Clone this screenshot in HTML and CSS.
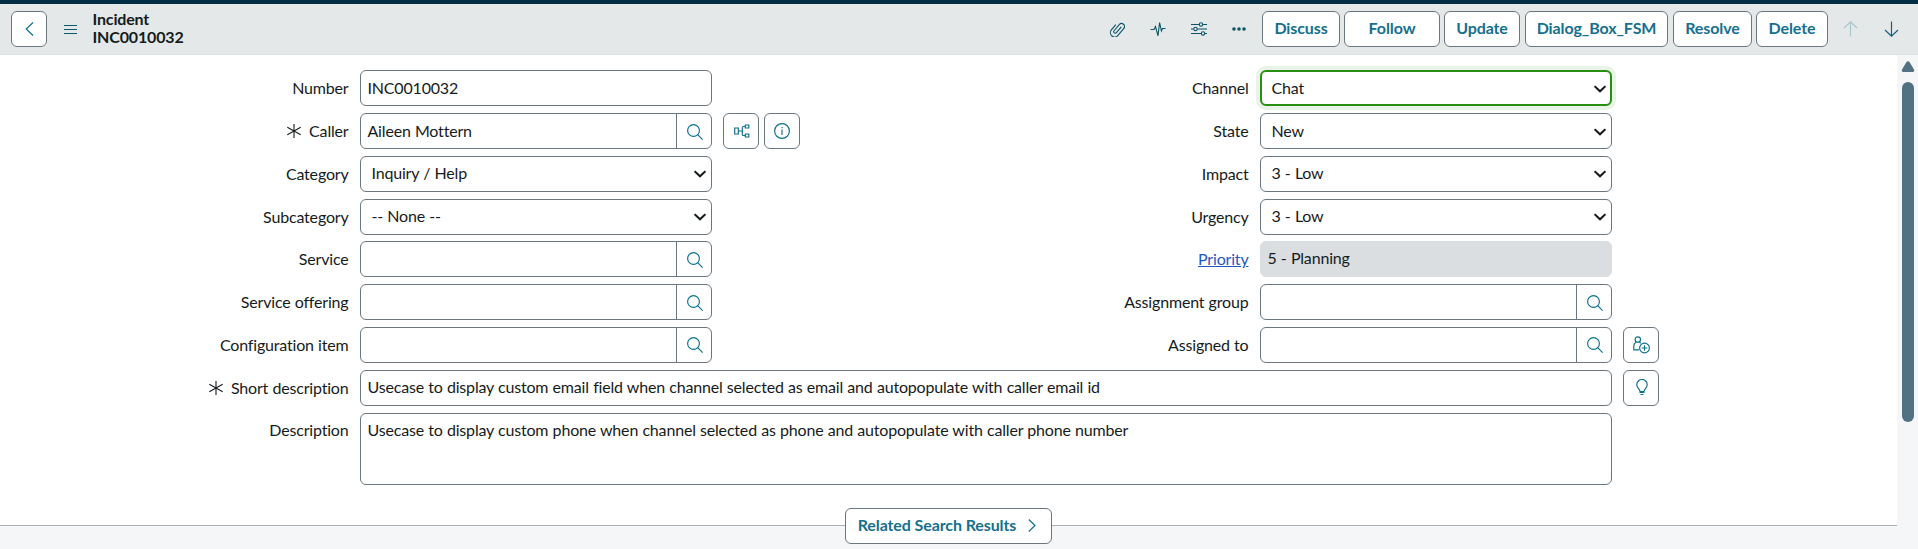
FILE: index.html
```html
<!DOCTYPE html>
<html lang="en">
<head>
<meta charset="utf-8">
<title>Incident INC0010032</title>
<link rel="stylesheet" href="styles.css">
</head>
<body>
<svg class="defs" width="0" height="0">
  <symbol id="search" viewBox="0 0 16 16"><circle cx="6.5" cy="6.5" r="5.9"/><path d="M10.7 10.7 15.6 15.6"/></symbol>
  <symbol id="chevron" viewBox="0 0 12 8"><path d="M.6 1.200 6 6.200l5.400-5"/></symbol>
  <symbol id="asterisk" viewBox="0 0 14 14"><path d="M7 0v14M.3 3.300l13.400 7.400M13.700 3.300l-13.400 7.400"/></symbol>
</svg>
<header class="header">
  <button class="btn back"><svg class="icon" width="9" height="14" viewBox="0 0 9 14"><path d="M8 .5 1.200 7 8 13.500"/></svg></button>
  <svg class="icon menu" width="13" height="9" viewBox="0 0 13 9"><path d="M0 .5h13M0 4.500h13M0 8.500h13"/></svg>
  <h1 class="title">Incident<br>INC0010032</h1>
  <div class="tools">
    <svg class="icon" width="16" height="16" viewBox="0 0 16 16"><path transform="translate(8 8) rotate(40)" d="M1.900-4.500V3.200a1.500 1.500 0 0 1-3 0V-4.800a3 3 0 0 1 6 0V4.300a4.300 4.300 0 0 1-8.600 0V-2.500"/></svg>
    <svg class="icon" width="16" height="16" viewBox="0 0 16 16"><path d="M.5 8.500H4l1.500-3L8 14.800 9.600 1.500l1.800 8.500 1.100-2.500h3"/></svg>
    <svg class="icon" width="16" height="14" viewBox="0 0 16 14"><path d="M0 2.500h8.300M11.700 2.500H16M0 7h2.800M6.200 7H16M0 11.500h10.300M13.700 11.500H16"/><circle cx="10" cy="2.500" r="1.700"/><circle cx="4.500" cy="7" r="1.700"/><circle cx="12" cy="11.500" r="1.700"/></svg>
    <svg class="dots" width="14" height="4" viewBox="0 0 14 4"><circle cx="2" cy="2" r="1.800"/><circle cx="7" cy="2" r="1.800"/><circle cx="12" cy="2" r="1.800"/></svg>
  </div>
  <div class="actions">
    <button class="btn discuss">Discuss</button>
    <button class="btn follow">Follow</button>
    <button class="btn update">Update</button>
    <button class="btn dialog">Dialog_Box_FSM</button>
    <button class="btn resolve">Resolve</button>
    <button class="btn delete">Delete</button>
  </div>
  <div class="pager">
    <svg class="icon disabled" width="15" height="16" viewBox="0 0 15 16"><path d="M7.500 15.500V1M1 7l6.500-6.200L14 7"/></svg>
    <svg class="icon" width="15" height="16" viewBox="0 0 15 16"><path d="M7.500 .5V15M1 9l6.500 6.200L14 9"/></svg>
  </div>
</header>
<div class="body">
  <main class="content">
    <form class="form">
      <div class="columns">
        <div class="column">
          <div class="row"><label class="label">Number</label><div class="field">INC0010032</div></div>
          <div class="row"><label class="label"><svg class="required" width="14" height="14"><use href="#asterisk"/></svg>Caller</label><div class="field lookup"><span class="value">Aileen Mottern</span><span class="lens"><svg class="icon" width="16" height="16"><use href="#search"/></svg></span></div>
            <div class="extras">
              <button type="button" class="btn square"><svg class="icon nodes" width="16" height="14" viewBox="0 0 16 14"><path d="M.7 4h3.600v6H.7zM4.300 7h4M11 2.500H9.300Q8.300 2.500 8.300 3.500v7q0 1 1 1H11M11.300 1h3.500v3h-3.500zM11.300 10h3.500v3h-3.500z"/></svg></button>
              <button type="button" class="btn square"><svg class="icon" width="16" height="16" viewBox="0 0 16 16"><circle cx="8" cy="8" r="7.400"/><path d="M8 6.500v5.500M8 4v1.300"/></svg></button>
            </div></div>
          <div class="row"><label class="label">Category</label><div class="field select">Inquiry / Help<svg class="chevron" width="12" height="8"><use href="#chevron"/></svg></div></div>
          <div class="row"><label class="label">Subcategory</label><div class="field select">-- None --<svg class="chevron" width="12" height="8"><use href="#chevron"/></svg></div></div>
          <div class="row snug"><label class="label">Service</label><div class="field lookup"><span class="value"></span><span class="lens"><svg class="icon" width="16" height="16"><use href="#search"/></svg></span></div></div>
          <div class="row"><label class="label">Service offering</label><div class="field lookup"><span class="value"></span><span class="lens"><svg class="icon" width="16" height="16"><use href="#search"/></svg></span></div></div>
          <div class="row"><label class="label">Configuration item</label><div class="field lookup"><span class="value"></span><span class="lens raised"><svg class="icon" width="16" height="16"><use href="#search"/></svg></span></div></div>
        </div>
        <div class="column">
          <div class="row"><label class="label">Channel</label><div class="field select focused">Chat<svg class="chevron" width="12" height="8"><use href="#chevron"/></svg></div></div>
          <div class="row"><label class="label">State</label><div class="field select low">New<svg class="chevron" width="12" height="8"><use href="#chevron"/></svg></div></div>
          <div class="row"><label class="label">Impact</label><div class="field select">3 - Low<svg class="chevron" width="12" height="8"><use href="#chevron"/></svg></div></div>
          <div class="row"><label class="label">Urgency</label><div class="field select">3 - Low<svg class="chevron" width="12" height="8"><use href="#chevron"/></svg></div></div>
          <div class="row snug"><label class="label"><a class="link" href="#">Priority</a></label><div class="field readonly">5 - Planning</div></div>
          <div class="row"><label class="label">Assignment group</label><div class="field lookup"><span class="value"></span><span class="lens"><svg class="icon" width="16" height="16"><use href="#search"/></svg></span></div></div>
          <div class="row"><label class="label">Assigned to</label><div class="field lookup"><span class="value"></span><span class="lens raised"><svg class="icon" width="16" height="16"><use href="#search"/></svg></span></div>
            <div class="extras"><button type="button" class="btn square"><svg class="icon" width="17" height="18" viewBox="0 0 17 18"><circle cx="4.800" cy="3.600" r="2.700"/><path d="M3.200 6.300C1.500 7 .8 8.500.8 10.500v3.300H6M6.500 6.300l1.300 1"/><circle cx="11.500" cy="12" r="4.900"/><path d="M11.500 9.200v5.600M8.700 12h5.600"/></svg></button></div></div>
        </div>
      </div>
      <div class="row"><label class="label"><svg class="required" width="14" height="14"><use href="#asterisk"/></svg>Short description</label><div class="field wide raised">Usecase to display custom email field when channel selected as email and autopopulate with caller email id</div>
        <div class="extras"><button type="button" class="btn square"><svg class="icon bulb" width="12" height="17" viewBox="0 0 12 17"><path d="M4 12.500C4 10 .8 9 .8 5.700a5.200 5.200 0 0 1 10.400 0C11.200 9 8 10 8 12.500z"/><path d="M3.500 13.500h5M4.500 15.500h3"/></svg></button></div></div>
      <div class="row top"><label class="label">Description</label><div class="field wide area">Usecase to display custom phone when channel selected as phone and autopopulate with caller phone number</div></div>
    </form>
    <div class="related"><button class="btn results">Related Search Results<svg class="icon" width="8" height="13" viewBox="0 0 8 13"><path d="M.8 .5 7 6.500.8 12.500"/></svg></button></div>
  </main>
  <aside class="scrollbar"><svg class="scroll-up" width="14" height="11" viewBox="0 0 14 11"><path d="M5.500 1Q7-.7 8.500 1L13 8.500Q13.800 10.900 12 10.900H2Q.2 10.900 1 8.500z"/></svg><div class="thumb"></div></aside>
</div>
</body>
</html>
```
FILE: styles.css
```css
* { box-sizing: border-box; }
body {
  margin: 0;
  height: 549px;
  overflow: hidden;
  display: flex;
  flex-direction: column;
  font: 16px/20px Lato, "Liberation Sans", sans-serif;
  letter-spacing: -0.18px;
  word-spacing: 0.35px;
  color: #161b1c;
  background: #fff;
}
.defs { display: none; }
.icon { fill: none; stroke: #0d6f8c; stroke-width: 1.15; flex: none; }
.header {
  height: 55px;
  flex: none;
  display: flex;
  align-items: center;
  border-top: 4px solid #032d42;
  border-bottom: 1px solid #dfe3e3;
  background: #e4e8e8;
  padding: 0 19.500px 0 11px;
}
.btn {
  height: 36px;
  display: flex;
  align-items: center;
  justify-content: center;
  flex: none;
  padding: 0 0 2px;
  border: 1px solid #6b7780;
  border-radius: 6px;
  background: #fff;
  color: #15708d;
  font: bold 16px/20px Lato, "Liberation Sans", sans-serif;
  letter-spacing: -0.1px;
}
.back { width: 36px; padding: 0; }
.menu { margin-left: 16.500px; stroke: #0b5a6c; }
.title { margin: -3px 0 0 16px; font-size: 16px; line-height: 18px; font-weight: bold; letter-spacing: -0.16px; }
.tools { margin-left: auto; display: flex; align-items: center; gap: 25px; margin-right: 16px; }
.tools .icon { stroke: #0b5568; stroke-width: 1.100; }
.dots { fill: #0b5568; }
.actions { display: flex; }
.discuss { width: 78px; margin-right: 4px; }
.follow { width: 96px; margin-right: 4px; }
.update { width: 76px; margin-right: 5px; }
.dialog { width: 143px; margin-right: 5px; }
.resolve { width: 79px; margin-right: 4px; }
.delete { width: 72px; }
.pager { display: flex; gap: 26px; margin-left: 14.500px; }
.pager .icon { stroke: #0b617a; }
.pager .disabled { stroke: #a9c6cd; }
.body { flex: 1; display: flex; min-height: 0; }
.content { flex: 1; display: flex; flex-direction: column; }
.form { padding-top: 15px; height: 453px; display: flex; flex-direction: column; gap: 7px; }
.columns { display: grid; grid-template-columns: 900px 1fr; }
.column { display: flex; flex-direction: column; gap: 7px; }
.row { display: flex; align-items: center; height: 36px; }
.snug { margin-top: -1px; }
.label {
  width: 360px;
  padding: 0 11.500px 0 0;
  display: flex;
  justify-content: flex-end;
  align-items: center;
}
.required { fill: none; stroke: #161b1c; stroke-width: 1.100; margin-right: 8px; }
.link { color: #1f5ac2; }
.field {
  width: 352px;
  height: 36px;
  display: flex;
  align-items: center;
  border: 1px solid #6b7780;
  border-radius: 6px;
  padding: 0 7px 1px 6.500px;
  white-space: nowrap;
}
.select { justify-content: space-between; padding: 0 5.500px 2px 10.500px; }
.low { padding-bottom: 1px; }
.focused { border: 2px solid #278f12; box-shadow: 0 0 0 4px #e9f3e7; padding: 0 4.500px 1px 9.500px; }
.chevron { fill: none; stroke: #161b1c; stroke-width: 2.100; position: relative; top: 1px; }
.lookup { padding: 0; }
.value { flex: 1; padding: 0 6.500px 1px; }
.lens { width: 35px; height: 34px; border-left: 1px solid #6b7780; display: flex; align-items: center; justify-content: center; padding: 2px 0 0 1px; }
.lens.raised { padding-top: 0; }
.readonly { border-color: #dadee1; background: #dadee1; padding: 0 7px 2px 6.500px; }
.wide { width: 1252px; }
.field.wide.raised { padding: 0 7px 2px 6.500px; }
.row.top { height: 72px; align-items: flex-start; }
.top .label { padding-top: 7px; }
.area { height: 72px; align-items: flex-start; padding-top: 6px; }
.extras { display: flex; gap: 5px; margin-left: 11px; }
.square { width: 36px; padding: 0; }
.nodes { margin-left: 2px; }
.bulb { margin: -2px 0 0 1px; }
.related { flex: 1; display: flex; justify-content: center; align-items: flex-start; background: linear-gradient(#fff 0 17px, #a9b2b5 17px 18px, #f4f6f8 18px); }
.results { width: 207px; gap: 12px; padding: 0 3px 2px 0; }
.scrollbar { width: 21px; background: #f4f6f8; display: flex; flex-direction: column; align-items: center; padding-top: 6px; }
.scroll-up { fill: #527282; margin-left: 1px; }
.thumb { width: 12px; height: 340px; margin: 10px 0 0 1px; border-radius: 6px; background: #527282; }
```
